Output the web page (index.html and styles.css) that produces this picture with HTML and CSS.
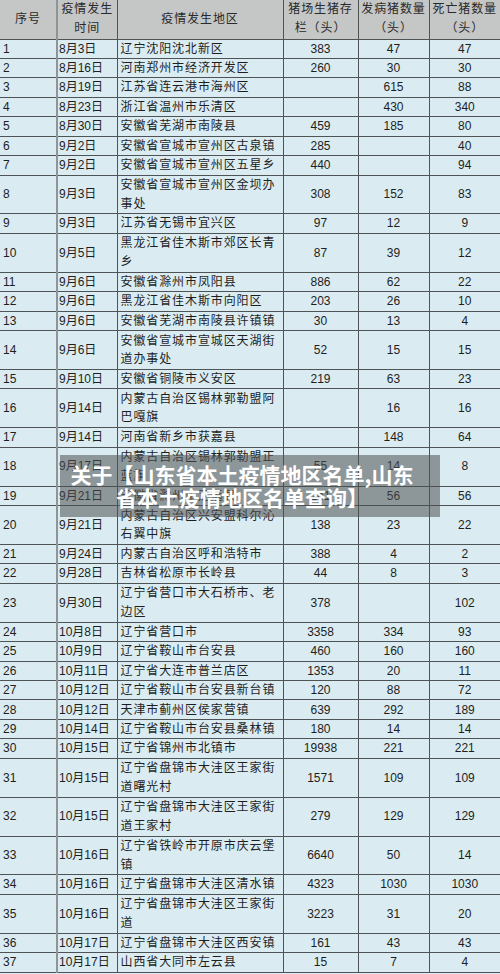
FILE: index.html
```html
<!DOCTYPE html>
<html lang="zh-CN">
<head>
<meta charset="utf-8">
<title>疫情地区名单</title>
<link rel="stylesheet" href="styles.css">
</head>
<body>
<div class="page">
<table class="grid">
<colgroup>
<col class="c-no"><col class="c-date"><col class="c-area"><col class="c-stock"><col class="c-sick"><col class="c-dead">
</colgroup>
<thead>
<tr class="head">
<th>序号</th><th>疫情发生<br>时间</th><th>疫情发生地区</th><th>猪场生猪存<br>栏（头）</th><th>发病猪数量<br>（头）</th><th>死亡猪数量<br>（头）</th>
</tr>
</thead>
<tbody>
<tr class="s"><td>1</td><td>8月3日</td><td>辽宁沈阳沈北新区</td><td>383</td><td>47</td><td>47</td></tr>
<tr class="s"><td>2</td><td>8月16日</td><td>河南郑州市经济开发区</td><td>260</td><td>30</td><td>30</td></tr>
<tr class="s"><td>3</td><td>8月19日</td><td>江苏省连云港市海州区</td><td></td><td>615</td><td>88</td></tr>
<tr class="s"><td>4</td><td>8月23日</td><td>浙江省温州市乐清区</td><td></td><td>430</td><td>340</td></tr>
<tr class="s"><td>5</td><td>8月30日</td><td>安徽省芜湖市南陵县</td><td>459</td><td>185</td><td>80</td></tr>
<tr class="s"><td>6</td><td>9月2日</td><td>安徽省宣城市宣州区古泉镇</td><td>285</td><td></td><td>40</td></tr>
<tr class="s"><td>7</td><td>9月2日</td><td>安徽省宣城市宣州区五星乡</td><td>440</td><td></td><td>94</td></tr>
<tr class="d"><td>8</td><td>9月3日</td><td>安徽省宣城市宣州区金坝办<br>事处</td><td>308</td><td>152</td><td>83</td></tr>
<tr class="s"><td>9</td><td>9月3日</td><td>江苏省无锡市宜兴区</td><td>97</td><td>12</td><td>9</td></tr>
<tr class="d"><td>10</td><td>9月5日</td><td>黑龙江省佳木斯市郊区长青<br>乡</td><td>87</td><td>39</td><td>12</td></tr>
<tr class="s"><td>11</td><td>9月6日</td><td>安徽省滁州市凤阳县</td><td>886</td><td>62</td><td>22</td></tr>
<tr class="s"><td>12</td><td>9月6日</td><td>黑龙江省佳木斯市向阳区</td><td>203</td><td>26</td><td>10</td></tr>
<tr class="s"><td>13</td><td>9月6日</td><td>安徽省芜湖市南陵县许镇镇</td><td>30</td><td>13</td><td>4</td></tr>
<tr class="d"><td>14</td><td>9月6日</td><td>安徽省宣城市宣城区天湖街<br>道办事处</td><td>52</td><td>15</td><td>15</td></tr>
<tr class="s"><td>15</td><td>9月10日</td><td>安徽省铜陵市义安区</td><td>219</td><td>63</td><td>23</td></tr>
<tr class="d"><td>16</td><td>9月14日</td><td>内蒙古自治区锡林郭勒盟阿<br>巴嘎旗</td><td></td><td>16</td><td>16</td></tr>
<tr class="s"><td>17</td><td>9月14日</td><td>河南省新乡市获嘉县</td><td></td><td>148</td><td>64</td></tr>
<tr class="d"><td>18</td><td>9月17日</td><td>内蒙古自治区锡林郭勒盟正<br>蓝旗</td><td>55</td><td>14</td><td>8</td></tr>
<tr class="s"><td>19</td><td>9月21日</td><td>安徽省滁州市定远县</td><td>241</td><td>56</td><td>56</td></tr>
<tr class="d"><td>20</td><td>9月21日</td><td>内蒙古自治区兴安盟科尔沁<br>右翼中旗</td><td>138</td><td>23</td><td>22</td></tr>
<tr class="s"><td>21</td><td>9月24日</td><td>内蒙古自治区呼和浩特市</td><td>388</td><td>4</td><td>2</td></tr>
<tr class="s"><td>22</td><td>9月28日</td><td>吉林省松原市长岭县</td><td>44</td><td>8</td><td>3</td></tr>
<tr class="d"><td>23</td><td>9月30日</td><td>辽宁省营口市大石桥市、老<br>边区</td><td>378</td><td></td><td>102</td></tr>
<tr class="s"><td>24</td><td>10月8日</td><td>辽宁省营口市</td><td>3358</td><td>334</td><td>93</td></tr>
<tr class="s"><td>25</td><td>10月9日</td><td>辽宁省鞍山市台安县</td><td>460</td><td>160</td><td>160</td></tr>
<tr class="s"><td>26</td><td>10月11日</td><td>辽宁省大连市普兰店区</td><td>1353</td><td>20</td><td>11</td></tr>
<tr class="s"><td>27</td><td>10月12日</td><td>辽宁省鞍山市台安县新台镇</td><td>120</td><td>88</td><td>72</td></tr>
<tr class="s"><td>28</td><td>10月12日</td><td>天津市蓟州区侯家营镇</td><td>639</td><td>292</td><td>189</td></tr>
<tr class="s"><td>29</td><td>10月14日</td><td>辽宁省鞍山市台安县桑林镇</td><td>180</td><td>14</td><td>14</td></tr>
<tr class="s"><td>30</td><td>10月15日</td><td>辽宁省锦州市北镇市</td><td>19938</td><td>221</td><td>221</td></tr>
<tr class="d"><td>31</td><td>10月15日</td><td>辽宁省盘锦市大洼区王家街<br>道曙光村</td><td>1571</td><td>109</td><td>109</td></tr>
<tr class="d"><td>32</td><td>10月15日</td><td>辽宁省盘锦市大洼区王家街<br>道王家村</td><td>279</td><td>129</td><td>129</td></tr>
<tr class="d"><td>33</td><td>10月16日</td><td>辽宁省铁岭市开原市庆云堡<br>镇</td><td>6640</td><td>50</td><td>14</td></tr>
<tr class="s"><td>34</td><td>10月16日</td><td>辽宁省盘锦市大洼区清水镇</td><td>4323</td><td>1030</td><td>1030</td></tr>
<tr class="d"><td>35</td><td>10月16日</td><td>辽宁省盘锦市大洼区王家街<br>道</td><td>3223</td><td>31</td><td>20</td></tr>
<tr class="s"><td>36</td><td>10月17日</td><td>辽宁省盘锦市大洼区西安镇</td><td>161</td><td>43</td><td>43</td></tr>
<tr class="s"><td>37</td><td>10月17日</td><td>山西省大同市左云县</td><td>15</td><td>7</td><td>4</td></tr>
</tbody>
</table>
<div class="caption">关于【山东省本土疫情地区名单,山东<br>省本土疫情地区名单查询】</div>
</div>
</body>
</html>
```

FILE: styles.css
```css
html, body {
  margin: 0;
  padding: 0;
  background: #daecf2;
}
.page {
  position: relative;
  width: 500px;
  overflow: hidden;
}
.grid {
  border-collapse: collapse;
  table-layout: fixed;
  width: 500px;
  font-family: "Liberation Sans", "Noto Sans CJK SC", sans-serif;
  font-size: 12px;
  color: #1e1e1e;
  background: #daecf2;
}
.c-no { width: 57px; }
.c-date { width: 60px; }
.c-area { width: 166px; }
.c-stock { width: 75px; }
.c-sick { width: 71px; }
.c-dead { width: 71px; }

.grid th,
.grid td {
  padding: 0;
  line-height: 18.4px;
  border: 1px solid #4e5355;
  vertical-align: middle;
  white-space: nowrap;
}
.grid tr > :first-child { border-left: none; }
.grid tr > :last-child { border-right: none; }
.grid thead th { border-top: none; }

.head { height: 39px; }
.head th {
  background: #c5c6c6;
  font-weight: 400;
  color: #2a2a2a;
  text-align: center;
  letter-spacing: 0.9px;
  line-height: 19px;
}
.grid tr > :nth-child(2) {
  border-left: 2px solid #8f9496;
}
.s { height: 19.45px; }
.d { height: 38.9px; }

.grid td:nth-child(1) { padding-left: 3px; }
.grid td:nth-child(2) { padding-left: 1px; }
.grid td:nth-child(3) { padding-left: 3px; letter-spacing: 0.9px; }
.grid td:nth-child(n+4) { text-align: center; }

.caption {
  position: absolute;
  left: 60px;
  top: 455px;
  width: 348px;
  padding: 8px 24px 8px 8px;
  background: rgba(78, 80, 80, 0.55);
  color: #ffffff;
  font-family: "Noto Sans CJK SC", sans-serif;
  font-weight: 700;
  font-size: 21px;
  line-height: 23px;
  text-align: center;
  white-space: nowrap;
}
```
